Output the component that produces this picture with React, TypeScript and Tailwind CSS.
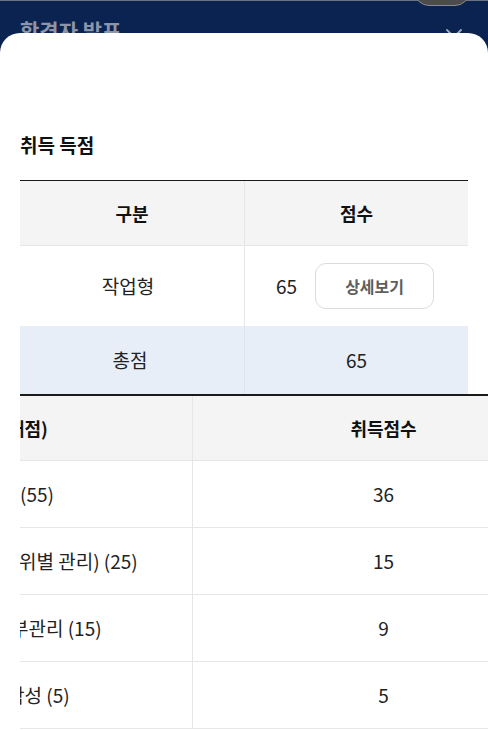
import { X } from "lucide-react";

const details = [
    { label: "(55)", shift: "ml-0", score: "36" },
    { label: "위별 관리) (25)", shift: "-ml-[1px]", score: "15" },
    { label: "부관리 (15)", shift: "-ml-[9px]", score: "9" },
    { label: "작성 (5)", shift: "-ml-[13px]", score: "5" },
];

export default function App() {

    return (
        <div
            className="
                relative flex h-[731px] flex-col overflow-hidden
                bg-[#0a2350]
                font-['Noto_Sans_CJK_KR','Noto_Sans',sans-serif]
            "
        >

            {/* Status line */}

            <div className="h-px bg-[#6b7280]" />

            <div
                className="
                    absolute top-[-24px] left-[414px]
                    h-[30px] w-[56px]
                    rounded-full border border-[#8a8a8a]
                    bg-[#4c4c4e]
                "
            />

            {/* Page header, dimmed behind the sheet */}

            <div className="flex h-[55px] shrink-0 items-start justify-between pl-5 pr-[20px] pt-[15px]">
                <span className="text-[21px] font-bold leading-[28px] text-[#8d96a8]">
                    합격자 발표
                </span>
                <X
                    className="mt-[7px] h-[28px] w-[28px] text-[#a0a8b8]"
                    strokeWidth={1.6}
                />
            </div>

            {/* Sheet */}

            <div className="relative -mt-[23px] flex-1 rounded-t-[20px] bg-white pt-[99px] text-[#222]">

                <h2 className="px-5 text-[19px] font-bold leading-[26px] text-[#111]">
                    취득 득점
                </h2>

                {/* Summary table */}

                <div className="mx-5 mt-[22px] grid grid-cols-2 border-t border-[#1a1a1a]">

                    <div className="flex h-[65px] items-center justify-center border-b border-[#e6e6e6] bg-[#f4f4f4] text-[18px] font-bold text-[#111]">
                        구분
                    </div>
                    <div className="flex h-[65px] items-center justify-center border-b border-l border-[#e6e6e6] bg-[#f4f4f4] text-[18px] font-bold text-[#111]">
                        점수
                    </div>

                    <div className="flex h-[80px] items-center justify-center pr-[8px] text-[19px]">
                        작업형
                    </div>
                    <div className="flex h-[80px] items-center gap-[18px] border-l border-[#e6e6e6] pl-[31px] text-[19px]">
                        <span>65</span>
                        <button
                            className="
                                flex h-[46px] w-[119px] items-center justify-center
                                rounded-[11px] border border-[#dcdcdc]
                                text-[16px] font-bold text-[#5e5e5e]
                            "
                        >
                            상세보기
                        </button>
                    </div>

                    <div className="flex h-[68px] items-center justify-center bg-[#e7eef8] pr-[4px] text-[19px]">
                        총점
                    </div>
                    <div className="flex h-[68px] items-center justify-center border-l border-[#dde4ee] bg-[#e7eef8] text-[19px]">
                        65
                    </div>

                </div>

                {/* Detail table, scrolled sideways */}

                <div className="ml-5 overflow-hidden border-t-2 border-[#1a1a1a]">
                    <div className="grid w-[554px] grid-cols-[172px_382px]">

                        <div className="flex h-[65px] items-center overflow-hidden whitespace-nowrap border-b border-[#e6e6e6] bg-[#f4f4f4] text-[18px] font-bold text-[#111]">
                            <span className="-ml-[12px]">배점)</span>
                        </div>
                        <div className="flex h-[65px] items-center justify-center border-b border-l border-[#e6e6e6] bg-[#f4f4f4] text-[18px] font-bold text-[#111]">
                            취득점수
                        </div>

                        {details.map((row) => (
                            <div key={row.score} className="contents">
                                <div className="flex h-[67px] items-center overflow-hidden whitespace-nowrap border-b border-[#e6e6e6] text-[19px]">
                                    <span className={row.shift}>{row.label}</span>
                                </div>
                                <div className="flex h-[67px] items-center justify-center border-b border-l border-[#e6e6e6] text-[19px]">
                                    {row.score}
                                </div>
                            </div>
                        ))}

                    </div>
                </div>

            </div>
        </div>
    );
}
